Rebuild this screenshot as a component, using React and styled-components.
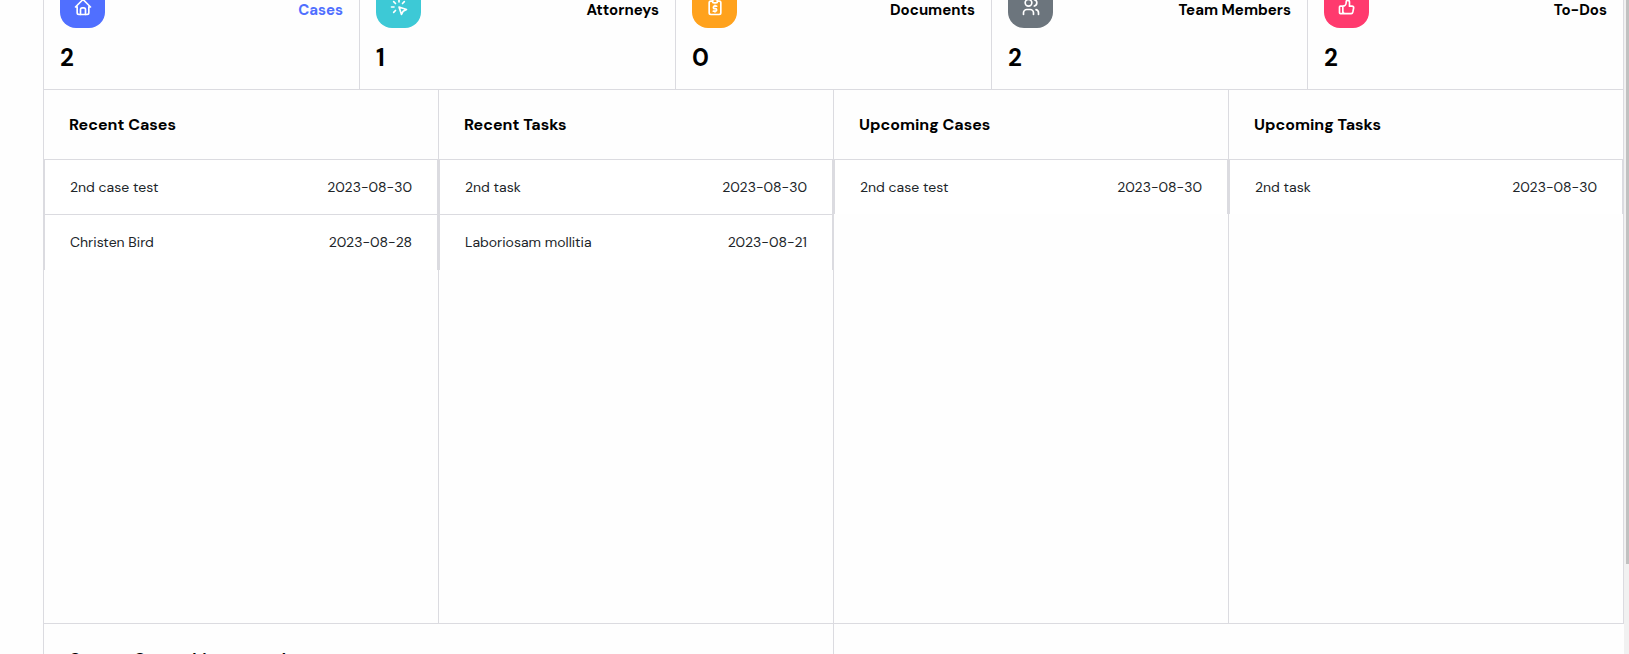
import React from "react";
import styled, { createGlobalStyle } from "styled-components";
import { TbClick, TbHome, TbThumbUp, TbUsers } from "react-icons/tb";

const line = "#dbdbe0";

const Global = createGlobalStyle`
  * { box-sizing: border-box; }
  html, body { margin: 0; height: 654px; overflow: hidden; background: #fefefe; }
  body { font-family: "DM Sans", Inter, sans-serif; color: #000; }
`;
const Page = styled.div`
  display: flex;
  height: 654px;
  padding-left: 43px;
  overflow: hidden;
`;
const Board = styled.main`
  width: 1581px;
  flex: none;
  border-left: 1px solid ${line};
`;
const Stats = styled.section`
  display: grid;
  grid-template-columns: repeat(5, 316px);
  height: 90px;
  border-bottom: 1px solid ${line};
`;
const Stat = styled.article`
  border-right: 1px solid ${line};
  padding: 0 16px;
`;
const StatTop = styled.div`
  display: flex;
  justify-content: space-between;
  height: 28px;
`;
const IconTile = styled.div`
  width: 45px;
  height: 45px;
  margin-top: -17px;
  border-radius: 16px;
  background: ${(p) => p.$color};
  color: #fff;
  display: flex;
  align-items: center;
  justify-content: center;
  svg { width: 20px; height: 20px; margin-top: 3px; }
`;
const StatName = styled.span`
  font-size: 15px;
  line-height: 20px;
  font-weight: 700;
  white-space: nowrap;
  color: ${(p) => (p.$active ? "#506fff" : "#000")};
`;
const StatValue = styled.div`
  margin-top: 14px;
  font-size: 24px;
  line-height: 32px;
  font-weight: 700;
`;
const Panels = styled.section`
  display: grid;
  grid-template-columns: repeat(4, 395px);
  height: 534px;
  border-bottom: 1px solid ${line};
`;
const Panel = styled.article`
  border-right: 1px solid ${line};
`;
const PanelTitle = styled.h2`
  margin: 0;
  height: 70px;
  padding: 0 25px;
  border-bottom: 1px solid ${line};
  font-size: 16px;
  line-height: 70px;
  font-weight: 700;
  white-space: nowrap;
`;
const Row = styled.div`
  display: flex;
  justify-content: space-between;
  height: ${(p) => (p.$last ? 54.4 : 55.4)}px;
  padding: 0 25px;
  border: solid ${line};
  border-width: ${(p) => (p.$last ? "0 1px" : "0 1px 1px")};
  background: #fff;
  font-size: 14px;
  line-height: 55px;
  color: #212529;
`;
const RowText = styled.span`
  white-space: nowrap;
`;
const Lower = styled.section`
  display: grid;
  grid-template-columns: 790px 790px;
`;
const LowerPanel = styled.article`
  border-right: ${(p) => (p.$divider ? `1px solid ${line}` : "0")};
`;
const ScrollTrack = styled.div`
  width: 5px;
  flex: none;
  padding-left: 2px;
  background: #f1f1f1;
`;
const ScrollThumb = styled.div`
  width: 3px;
  height: 564px;
  background: #c1c1c1;
`;
const ClipboardDollar = () => (
  <svg viewBox="0 0 24 24" fill="none" stroke="currentColor" strokeWidth="2" strokeLinecap="round" strokeLinejoin="round">
    <path d="M9 5H7a2 2 0 0 0-2 2v12a2 2 0 0 0 2 2h10a2 2 0 0 0 2-2V7a2 2 0 0 0-2-2h-2" />
    <rect x="9" y="3" width="6" height="4" rx="2" />
    <path d="M14 11h-2.5a1.5 1.5 0 0 0 0 3h1a1.5 1.5 0 0 1 0 3H10M12 17v1m0-8v1" />
  </svg>
);
const stats = [
  { name: "Cases", value: 2, color: "#506fff", Icon: TbHome, active: true },
  { name: "Attorneys", value: 1, color: "#3dc9d6", Icon: TbClick },
  { name: "Documents", value: 0, color: "#ffa21d", Icon: ClipboardDollar },
  { name: "Team Members", value: 2, color: "#6c757d", Icon: TbUsers },
  { name: "To-Dos", value: 2, color: "#ff3a6e", Icon: TbThumbUp },
];
const panels = [
  { title: "Recent Cases", rows: [["2nd case test", "2023-08-30"], ["Christen Bird", "2023-08-28"]] },
  { title: "Recent Tasks", rows: [["2nd task", "2023-08-30"], ["Laboriosam mollitia", "2023-08-21"]] },
  { title: "Upcoming Cases", rows: [["2nd case test", "2023-08-30"]] },
  { title: "Upcoming Tasks", rows: [["2nd task", "2023-08-30"]] },
];

export default function App() {
  return (
    <Page>
      <Global />
      <Board>
        <Stats>
          {stats.map(({ name, value, color, Icon, active }) => (
            <Stat key={name}>
              <StatTop>
                <IconTile $color={color}><Icon /></IconTile>
                <StatName $active={active}>{name}</StatName>
              </StatTop>
              <StatValue>{value}</StatValue>
            </Stat>
          ))}
        </Stats>
        <Panels>
          {panels.map((p) => (
            <Panel key={p.title}>
              <PanelTitle>{p.title}</PanelTitle>
              {p.rows.map(([label, date], i) => (
                <Row key={label} $last={i === p.rows.length - 1}>
                  <RowText>{label}</RowText>
                  <RowText>{date}</RowText>
                </Row>
              ))}
            </Panel>
          ))}
        </Panels>
        <Lower>
          <LowerPanel $divider><PanelTitle>Current Cases this quarter by</PanelTitle></LowerPanel>
          <LowerPanel />
        </Lower>
      </Board>
      <ScrollTrack><ScrollThumb /></ScrollTrack>
    </Page>
  );
}
